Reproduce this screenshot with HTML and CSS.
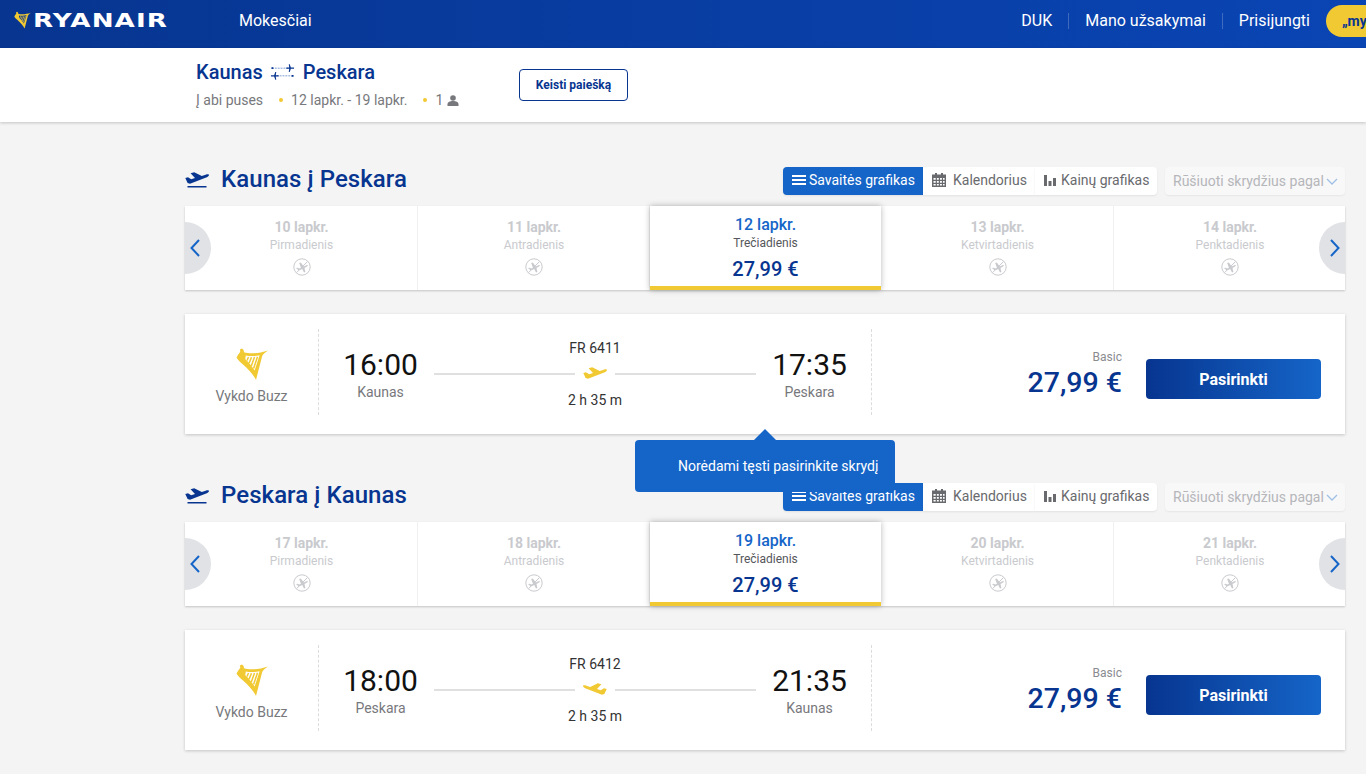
FILE: index.html
```html
<!DOCTYPE html>
<html lang="lt">
<head>
<meta charset="utf-8">
<title>Ryanair</title>
<link rel="stylesheet" href="styles.css">
</head>
<body>
<svg class="sprite" aria-hidden="true">
  <symbol id="harp" viewBox="0 0 32 32">
    <path fill-rule="evenodd" d="M0.5 9.500C1.500 7.500 3 5.500 4.300 3.800L3.900 1.600 6 0.400 7.600 1.900 8 4.200C14 6 23 5.400 32 2.400 29 4.400 27.200 5.800 26.200 8L20 32C17.600 27 12 21 7 16.500 4.200 14.200 1.800 12 0.500 9.500ZM9.800 7.400L9.300 11.200C12.400 14 15.800 17.800 18.600 22.500L23.600 7.200C19 8.200 14 8.400 9.800 7.400Z"/>
    <path d="M12.500 9L11 12.500M15.500 9.200L13 15.200M18.500 9L15.300 18M21.500 8.800L17.600 20.600" fill="none" stroke="#f1c933" stroke-width="1.500"/>
  </symbol>
  <symbol id="plane" viewBox="0 0 24 14">
    <path d="M0.300 6L3 5.200 6.200 7.200 10 5.900 5.600 1.200 9.200 0.200 16.800 4 20.600 2.700C22.600 2 24 2.200 24 3 24 4 22.500 5 20.500 5.800L5 11.700 2.600 10.900Z"/>
  </symbol>
  <symbol id="ban" viewBox="0 0 18 18">
    <circle cx="9" cy="9" r="8.200" fill="none" stroke="currentColor" stroke-width="1"/>
    <path d="M3.600 14.600L14.400 3.600" fill="none" stroke="currentColor" stroke-width="1"/>
    <path d="M3 10L4.600 9.700 6.200 10.600 8 9.900 6.200 5 7.800 4.500 10.800 8.600 13.400 7.200C14.800 6.600 15.400 7.700 14.400 8.300L11.500 9.900 12.400 14 11 14.500 9.200 11 5.800 12.600Z" fill="currentColor"/>
  </symbol>
  <symbol id="swap" viewBox="0 0 26 18">
    <path d="M2 5H19M7 13H24" fill="none" stroke="#a9bde0" stroke-width="1.600" stroke-dasharray="2 1"/>
    <path d="M1.500 4h2v2h-2zM22.500 12h2v2h-2zM19.500 1h1l1.200 3.400H25v1.200h-3.300L20.500 9h-1l.5-3.400H17V4.400h3zM6.500 9h-1L4.300 12.400H1v1.200h3.300L5.500 17h1L6 13.600h3v-1.200H6z" fill="#073590"/>
  </symbol>
  <symbol id="left" viewBox="0 0 12 20">
    <path d="M10 2L2.500 10 10 18" fill="none" stroke="currentColor" stroke-width="2"/>
  </symbol>
  <symbol id="right" viewBox="0 0 12 20">
    <path d="M2 2L9.500 10 2 18" fill="none" stroke="currentColor" stroke-width="2"/>
  </symbol>
  <symbol id="menu" viewBox="0 0 14 10">
    <path d="M0 0h14v2H0zM0 4h14v2H0zM0 8h14v2H0z" fill="currentColor"/>
  </symbol>
  <symbol id="cal" viewBox="0 0 14 14">
    <path fill-rule="evenodd" d="M3 0h2v1.500h4V0h2v1.500h3V14H0V1.500h3zM1.500 5v1.800h2.200V5zm3.400 0v1.800h1.900V5zm3.100 0v1.800h1.900V5zm3 0v1.800h1.600V5zM1.500 8v1.800h2.200V8zm3.400 0v1.800h1.900V8zm3.100 0v1.800h1.900V8zm3 0v1.800h1.600V8zM1.500 11v1.500h2.200V11zm3.400 0v1.500h1.900V11zm3.100 0v1.500h1.900V11zm3 0v1.500h1.600V11z" fill="currentColor"/>
  </symbol>
  <symbol id="bars" viewBox="0 0 12 12">
    <path d="M0 1h3v11H0zM4.500 7h3v5h-3zM9 4h3v8H9z" fill="currentColor"/>
  </symbol>
  <symbol id="chev" viewBox="0 0 12 7">
    <path d="M1 1l5 5 5-5" fill="none" stroke="currentColor" stroke-width="1.300"/>
  </symbol>
  <symbol id="person" viewBox="0 0 12 11">
    <circle cx="6" cy="3" r="2.800" fill="currentColor"/>
    <path d="M0.500 11V9.200C0.500 7 3 6 6 6s5.500 1 5.500 3.200V11z" fill="currentColor"/>
  </symbol>
</svg>

<header class="topbar">
  <a class="brand">
    <svg class="brand-harp"><use href="#harp"/></svg>
    <span class="brand-name">RYANAIR</span>
  </a>
  <a class="nav-fees">Mokesčiai</a>
  <nav class="nav-right">
    <a class="nav-link">DUK</a>
    <a class="nav-link nav-sep">Mano užsakymai</a>
    <a class="nav-link nav-sep">Prisijungti</a>
    <a class="my-pill">„my</a>
  </nav>
</header>

<div class="summary">
  <div class="summary-text">
    <div class="summary-route">Kaunas <svg class="swap"><use href="#swap"/></svg> Peskara</div>
    <div class="summary-meta">
      <span>Į abi puses</span>
      <i class="dot"></i>
      <span>12 lapkr. - 19 lapkr.</span>
      <i class="dot"></i>
      <span>1</span>
      <svg class="person"><use href="#person"/></svg>
    </div>
  </div>
  <button class="change-btn">Keisti paiešką</button>
</div>

<main class="page">
  <section class="leg">
    <div class="leg-head">
      <svg class="leg-icon"><use href="#plane"/></svg>
      <h2 class="leg-title">Kaunas į Peskara</h2>
      <div class="tabs">
        <a class="tab tab-active"><svg class="ic-menu"><use href="#menu"/></svg>Savaitės grafikas</a>
        <a class="tab tab-cal"><svg class="ic-cal"><use href="#cal"/></svg>Kalendorius</a>
        <a class="tab tab-price"><svg class="ic-bars"><use href="#bars"/></svg>Kainų grafikas</a>
      </div>
      <div class="sort">Rūšiuoti skrydžius pagal<svg class="ic-chev"><use href="#chev"/></svg></div>
    </div>
    <div class="dates">
      <div class="day"><b class="day-date">10 lapkr.</b><span class="day-name">Pirmadienis</span><svg class="ban"><use href="#ban"/></svg></div>
      <div class="day"><b class="day-date">11 lapkr.</b><span class="day-name">Antradienis</span><svg class="ban"><use href="#ban"/></svg></div>
      <div class="day day-on"><b class="day-date">12 lapkr.</b><span class="day-name">Trečiadienis</span><strong class="day-price">27,99 €</strong></div>
      <div class="day"><b class="day-date">13 lapkr.</b><span class="day-name">Ketvirtadienis</span><svg class="ban"><use href="#ban"/></svg></div>
      <div class="day"><b class="day-date">14 lapkr.</b><span class="day-name">Penktadienis</span><svg class="ban"><use href="#ban"/></svg></div>
      <a class="arrow arrow-l"><svg class="arrow-ic"><use href="#left"/></svg></a>
      <a class="arrow arrow-r"><svg class="arrow-ic"><use href="#right"/></svg></a>
    </div>
    <article class="flight">
      <div class="carrier"><svg class="carrier-harp"><use href="#harp"/></svg><span>Vykdo Buzz</span></div>
      <div class="times">
        <div class="stop"><div class="stop-time">16:00</div><div class="stop-city">Kaunas</div></div>
        <div class="path">
          <div class="path-no">FR 6411</div>
          <div class="path-line"><svg class="path-plane"><use href="#plane"/></svg></div>
          <div class="path-dur">2 h 35 m</div>
        </div>
        <div class="stop"><div class="stop-time">17:35</div><div class="stop-city">Peskara</div></div>
      </div>
      <div class="fare"><span class="fare-name">Basic</span><strong class="fare-price">27,99 €</strong></div>
      <button class="pick">Pasirinkti</button>
    </article>
    <div class="tip">Norėdami tęsti pasirinkite skrydį</div>
  </section>

  <section class="leg">
    <div class="leg-head">
      <svg class="leg-icon"><use href="#plane"/></svg>
      <h2 class="leg-title">Peskara į Kaunas</h2>
      <div class="tabs">
        <a class="tab tab-active"><svg class="ic-menu"><use href="#menu"/></svg>Savaitės grafikas</a>
        <a class="tab tab-cal"><svg class="ic-cal"><use href="#cal"/></svg>Kalendorius</a>
        <a class="tab tab-price"><svg class="ic-bars"><use href="#bars"/></svg>Kainų grafikas</a>
      </div>
      <div class="sort">Rūšiuoti skrydžius pagal<svg class="ic-chev"><use href="#chev"/></svg></div>
    </div>
    <div class="dates">
      <div class="day"><b class="day-date">17 lapkr.</b><span class="day-name">Pirmadienis</span><svg class="ban"><use href="#ban"/></svg></div>
      <div class="day"><b class="day-date">18 lapkr.</b><span class="day-name">Antradienis</span><svg class="ban"><use href="#ban"/></svg></div>
      <div class="day day-on"><b class="day-date">19 lapkr.</b><span class="day-name">Trečiadienis</span><strong class="day-price">27,99 €</strong></div>
      <div class="day"><b class="day-date">20 lapkr.</b><span class="day-name">Ketvirtadienis</span><svg class="ban"><use href="#ban"/></svg></div>
      <div class="day"><b class="day-date">21 lapkr.</b><span class="day-name">Penktadienis</span><svg class="ban"><use href="#ban"/></svg></div>
      <a class="arrow arrow-l"><svg class="arrow-ic"><use href="#left"/></svg></a>
      <a class="arrow arrow-r"><svg class="arrow-ic"><use href="#right"/></svg></a>
    </div>
    <article class="flight">
      <div class="carrier"><svg class="carrier-harp"><use href="#harp"/></svg><span>Vykdo Buzz</span></div>
      <div class="times">
        <div class="stop"><div class="stop-time">18:00</div><div class="stop-city">Peskara</div></div>
        <div class="path">
          <div class="path-no">FR 6412</div>
          <div class="path-line"><svg class="path-plane path-plane-land"><use href="#plane"/></svg></div>
          <div class="path-dur">2 h 35 m</div>
        </div>
        <div class="stop"><div class="stop-time">21:35</div><div class="stop-city">Kaunas</div></div>
      </div>
      <div class="fare"><span class="fare-name">Basic</span><strong class="fare-price">27,99 €</strong></div>
      <button class="pick">Pasirinkti</button>
    </article>
  </section>
</main>
</body>
</html>
```

FILE: styles.css
```css
* { box-sizing: border-box; }

html, body {
  margin: 0;
  height: 774px;
  overflow: hidden;
}

body {
  background: #f4f4f4;
  font-family: Roboto, "Liberation Sans", sans-serif;
  color: #333;
}

.sprite { position: absolute; width: 0; height: 0; }

/* top bar */
.topbar {
  display: flex;
  align-items: center;
  height: 48px;
  padding-left: 14px;
  background: linear-gradient(90deg, #073590 0%, #0a45b4 100%);
  color: #fff;
}

.brand { display: flex; align-items: center; width: 225px; margin-top: -9px; }

.brand-harp { width: 17px; height: 18px; fill: #f1c933; flex: none; }

.brand-name {
  display: inline-block;
  margin-left: 2px;
  font-family: "DejaVu Sans", sans-serif;
  font-weight: 700;
  font-size: 20px;
  line-height: 20px;
  letter-spacing: 0.8px;
  transform: scaleX(1.31);
  transform-origin: 0 50%;
}

.nav-fees { font-size: 16px; margin-top: -7px; }

.nav-right { display: flex; align-items: center; margin-left: auto; margin-top: -7px; }

.nav-link { font-size: 16px; line-height: 16px; padding-right: 16px; }

.nav-sep {
  border-left: 1px solid rgba(255, 255, 255, 0.22);
  padding-left: 16px;
}

.my-pill {
  width: 40px;
  height: 32px;
  padding-left: 16px;
  border-radius: 16px 0 0 16px;
  background: #f1c933;
  color: #073590;
  font-size: 14px;
  font-weight: 700;
  line-height: 32px;
  white-space: nowrap;
  overflow: hidden;
  flex: none;
}

/* trip summary */
.summary {
  display: flex;
  align-items: center;
  height: 74px;
  padding-left: 196px;
  background: #fff;
  box-shadow: 0 1px 3px rgba(0, 0, 0, 0.2);
  position: relative;
}

.summary-text { width: 323px; margin-top: -2px; }

.summary-route {
  display: flex;
  align-items: center;
  gap: 7.5px;
  height: 24px;
  color: #073590;
  font-size: 20px;
  font-weight: 500;
}

.swap { width: 25px; height: 18px; }

.summary-meta {
  display: flex;
  align-items: center;
  height: 16px;
  margin-top: 8px;
  color: #77787c;
  font-size: 14px;
}

.dot {
  width: 4px;
  height: 4px;
  margin: 0 8px 0 16px;
  border-radius: 50%;
  background: #f1c933;
}

.person { width: 12px; height: 11px; margin-left: 4px; color: #77787c; }

.change-btn {
  width: 109px;
  height: 32px;
  margin-top: -1px;
  padding: 0;
  border: 1px solid #073590;
  border-radius: 4px;
  background: #fff;
  color: #073590;
  font: 700 12px Roboto, sans-serif;
}

/* page */
.page { width: 1160px; margin-left: 185px; padding-top: 45px; }

.leg { position: relative; margin-bottom: 49px; }

.leg-head { display: flex; height: 28px; }

.leg-icon {
  width: 24px;
  height: 14px;
  margin: 5px 12px 0 0;
  fill: #073590;
  flex: none;
  box-shadow: 0 4px 0 -2.5px #073590;
}

.leg-title {
  margin: 0;
  color: #073590;
  font-size: 24px;
  font-weight: 500;
  line-height: 24px;
  letter-spacing: 0.06px;
  flex: 1;
}

.tabs { display: flex; height: 28px; }

.tab {
  display: flex;
  align-items: center;
  height: 28px;
  padding-bottom: 2px;
  background: #fff;
  color: #696a6e;
  font-size: 14px;
  box-shadow: 0 1px 2px rgba(0, 0, 0, 0.08);
}

.tab-active {
  width: 140px;
  padding-left: 9px;
  gap: 3px;
  background: #1565c8;
  color: #fff;
  border-radius: 4px 0 0 4px;
}

.tab-cal { width: 112px; padding-left: 9px; gap: 7px; }

.tab-price { width: 122px; padding-left: 9px; gap: 5px; border-radius: 0 4px 4px 0; }

.ic-menu { width: 14px; height: 10px; flex: none; }
.ic-cal { width: 14px; height: 14px; flex: none; color: #696a6e; }
.ic-bars { width: 12px; height: 12px; flex: none; color: #696a6e; }

.sort {
  display: flex;
  align-items: center;
  width: 180px;
  height: 28px;
  margin-left: 8px;
  padding-left: 8px;
  border-radius: 4px;
  background: #f8f8f8;
  box-shadow: 0 1px 2px rgba(0, 0, 0, 0.06);
  color: #b5b6ba;
  font-size: 14px;
  white-space: nowrap;
}

.ic-chev { width: 12px; height: 7px; margin-left: 2px; color: #9fc0e6; }

/* date carousel */
.dates {
  position: relative;
  display: grid;
  grid-template-columns: 233px 232px 231px 233px 231px;
  height: 84px;
  margin-top: 11px;
  background: #fff;
  box-shadow: 0 1px 2px rgba(0, 0, 0, 0.2);
}

.day {
  display: flex;
  flex-direction: column;
  align-items: center;
  padding: 13px 0 0 1px;
  border-right: 1px solid #f0f0f0;
  color: #c9cace;
}

.day:last-of-type { border-right: 0; }

.day-date { font-size: 14px; font-weight: 700; line-height: 16px; }

.day-name { margin-top: 3px; font-size: 12px; line-height: 14px; }

.ban { width: 18px; height: 18px; margin-top: 6px; color: #c9cace; }

.day-on {
  position: relative;
  padding: 11px 0 0;
  border-right: 0;
  border-bottom: 4px solid #f1c933;
  background: #fff;
  box-shadow: 0 0 6px rgba(0, 0, 0, 0.28);
  color: #55565a;
}

.day-on .day-date { color: #1565c8; font-size: 16px; font-weight: 500; }

.day-price {
  margin-top: 7px;
  color: #073590;
  font-size: 20px;
  font-weight: 500;
  line-height: 24px;
}

.arrow {
  position: absolute;
  top: 16px;
  display: flex;
  align-items: center;
  width: 26px;
  height: 52px;
  background: #e1e2e6;
  color: #1565c8;
}

.arrow-l { left: 0; padding-left: 4px; border-radius: 0 26px 26px 0; }
.arrow-r { right: 0; padding-left: 10px; border-radius: 26px 0 0 26px; }
.arrow-ic { width: 12px; height: 20px; }

/* flight card */
.flight {
  display: flex;
  align-items: flex-start;
  height: 120px;
  margin-top: 24px;
  padding: 15px 24px 15px 0;
  background: #fff;
  box-shadow: 0 1px 3px rgba(0, 0, 0, 0.2);
}

.carrier {
  display: flex;
  flex-direction: column;
  align-items: center;
  width: 134px;
  height: 86px;
  color: #77787c;
  font-size: 14px;
  border-right: 1px dashed #dcdcdc;
}

.carrier-harp {
  width: 32px;
  height: 32px;
  margin: 19px 0 8px;
  fill: #f1c933;
}

.carrier span { line-height: 16px; }

.times {
  display: flex;
  width: 553px;
  height: 86px;
  padding: 0 24px;
  gap: 16px;
  border-right: 1px dashed #dcdcdc;
}

.stop { width: 75px; text-align: center; flex: none; padding-top: 18px; }

.stop-time { color: #111; font-size: 30px; line-height: 36px; }

.stop-city { margin-top: 1px; color: #77787c; font-size: 14px; line-height: 16px; }

.path { width: 322px; text-align: center; color: #333; flex: none; }

.path-no { margin-top: 11px; font-size: 14px; line-height: 16px; }

.path-line {
  display: flex;
  justify-content: center;
  height: 18px;
  margin-top: 9px;
  background: linear-gradient(#e0e0e0, #e0e0e0) 0 8px / 100% 2px no-repeat;
}

.path-plane {
  width: 40px;
  height: 18px;
  padding: 2px 8px;
  background: #fff;
  fill: #f1c933;
}

.path-plane-land { transform: scaleX(-1); }

.path-dur { margin-top: 9px; font-size: 14px; line-height: 16px; }

.fare {
  display: flex;
  flex-direction: column;
  align-items: flex-end;
  flex: 1;
  padding: 21px 24px 0 0;
}

.fare-name { color: #8a8b8f; font-size: 12px; line-height: 14px; }

.fare-price {
  margin-top: 3px;
  color: #073590;
  font-size: 28.500px;
  font-weight: 500;
  line-height: 32px;
}

.pick {
  width: 175px;
  height: 40px;
  margin-top: 30px;
  padding: 0;
  border: 0;
  border-radius: 4px;
  background: linear-gradient(90deg, #073590, #1565c8);
  color: #fff;
  font: 700 16px Roboto, sans-serif;
}

/* tooltip */
.tip {
  position: absolute;
  top: 273px;
  left: 450px;
  z-index: 5;
  width: 260px;
  height: 52px;
  padding-left: 43px;
  border-radius: 4px;
  background: #1565c8;
  color: #fff;
  font-size: 14px;
  line-height: 52px;
}

.tip::before {
  content: "";
  position: absolute;
  top: -11px;
  left: 130px;
  width: 0;
  height: 0;
  transform: translateX(-50%);
  border-left: 12px solid transparent;
  border-right: 12px solid transparent;
  border-bottom: 12px solid #1565c8;
}
```
